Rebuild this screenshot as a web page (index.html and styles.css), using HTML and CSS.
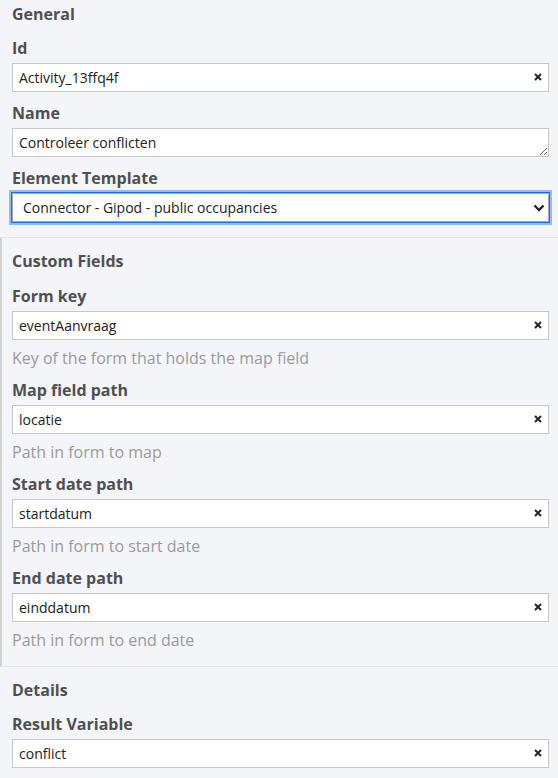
FILE: index.html
```html
<!DOCTYPE html>
<html>
<head>
<meta charset="utf-8">
<link rel="stylesheet" href="styles.css">
</head>
<body>
<div class="panel">
  <section class="group group-first">
    <div class="group-title">General</div>
    <div class="entry">
      <label class="label">Id</label>
      <div class="field-wrap">
        <input class="field" type="text" value="Activity_13ffq4f">
        <span class="clear"><svg width="8" height="8" viewBox="0 0 8 8"><path d="M1 1L7 7M7 1L1 7" stroke="#22242a" stroke-width="2"/></svg></span>
      </div>
    </div>
    <div class="entry">
      <label class="label">Name</label>
      <textarea class="field area" rows="1">Controleer conflicten</textarea>
    </div>
    <div class="entry">
      <label class="label">Element Template</label>
      <div class="field-wrap">
        <select class="field select">
          <option>Connector - Gipod - public occupancies</option>
        </select>
        <span class="chevron"><svg width="12" height="8" viewBox="0 0 12 8"><path d="M1.5 1.5L6 6L10.5 1.5" fill="none" stroke="#22242a" stroke-width="2.4"/></svg></span>
      </div>
    </div>
  </section>

  <section class="group group-custom">
    <div class="group-title">Custom Fields</div>
    <div class="entry">
      <label class="label">Form key</label>
      <div class="field-wrap">
        <input class="field" type="text" value="eventAanvraag">
        <span class="clear"><svg width="8" height="8" viewBox="0 0 8 8"><path d="M1 1L7 7M7 1L1 7" stroke="#22242a" stroke-width="2"/></svg></span>
      </div>
      <div class="desc">Key of the form that holds the map field</div>
    </div>
    <div class="entry">
      <label class="label">Map field path</label>
      <div class="field-wrap">
        <input class="field" type="text" value="locatie">
        <span class="clear"><svg width="8" height="8" viewBox="0 0 8 8"><path d="M1 1L7 7M7 1L1 7" stroke="#22242a" stroke-width="2"/></svg></span>
      </div>
      <div class="desc">Path in form to map</div>
    </div>
    <div class="entry">
      <label class="label">Start date path</label>
      <div class="field-wrap">
        <input class="field" type="text" value="startdatum">
        <span class="clear"><svg width="8" height="8" viewBox="0 0 8 8"><path d="M1 1L7 7M7 1L1 7" stroke="#22242a" stroke-width="2"/></svg></span>
      </div>
      <div class="desc">Path in form to start date</div>
    </div>
    <div class="entry">
      <label class="label">End date path</label>
      <div class="field-wrap">
        <input class="field" type="text" value="einddatum">
        <span class="clear"><svg width="8" height="8" viewBox="0 0 8 8"><path d="M1 1L7 7M7 1L1 7" stroke="#22242a" stroke-width="2"/></svg></span>
      </div>
      <div class="desc">Path in form to end date</div>
    </div>
  </section>

  <section class="group group-details">
    <div class="group-title">Details</div>
    <div class="entry">
      <label class="label">Result Variable</label>
      <div class="field-wrap">
        <input class="field" type="text" value="conflict">
        <span class="clear"><svg width="8" height="8" viewBox="0 0 8 8"><path d="M1 1L7 7M7 1L1 7" stroke="#22242a" stroke-width="2"/></svg></span>
      </div>
    </div>
  </section>
</div>
</body>
</html>
```

FILE: styles.css
```css
html, body {
  margin: 0;
  padding: 0;
  background: #f3f5f9;
}
body {
  font-family: "Open Sans", "Noto Sans", sans-serif;
  color: #505050;
  overflow: hidden;
}
.panel {
  display: flex;
  flex-direction: column;
}
.group {
  padding: 13px 9px 15px 12px;
  border-bottom: 1px solid #e3e6eb;
}
.group-first {
  padding-top: 4px;
}
.group-custom {
  border-left: 2px solid #d3d3d3;
  padding-left: 10px;
  padding-bottom: 16px;
}
.group-details {
  border-bottom: none;
}
.group-title {
  font-size: 16px;
  font-weight: 700;
  line-height: 20px;
  margin-bottom: 14px;
}
.group-custom .group-title {
  margin-bottom: 15px;
}
.entry {
  margin-bottom: 11px;
}
.entry:last-child {
  margin-bottom: 0;
}
.label {
  display: block;
  font-size: 16px;
  font-weight: 700;
  line-height: 20px;
  margin-bottom: 5px;
}
.field-wrap {
  position: relative;
}
.field {
  display: block;
  box-sizing: border-box;
  width: 100%;
  height: 29px;
  margin: 0;
  border: 1px solid #c8c8c8;
  border-radius: 0;
  background: #fff;
  font-family: "Open Sans", "Noto Sans", sans-serif;
  font-size: 14px;
  color: #222;
  padding: 0 24px 0 6px;
  outline: none;
}
.area {
  padding: 4px 6px;
  line-height: 19px;
  resize: vertical;
}
.select {
  appearance: none;
  -webkit-appearance: none;
  padding-left: 10px;
  border-color: #a9a9a9;
  box-shadow: 0 0 0 1px #1b6fe0, 0 0 0 3px #93bcf7;
}
.clear {
  position: absolute;
  right: 7px;
  top: 10px;
  width: 8px;
  height: 8px;
  display: flex;
}
.chevron {
  position: absolute;
  right: 4px;
  top: 11px;
  display: flex;
  pointer-events: none;
}
.desc {
  font-size: 16px;
  line-height: 20px;
  color: #9b9b9b;
  margin-top: 8px;
  margin-bottom: 12px;
}
.entry:last-child .desc {
  margin-bottom: 0;
}
```
